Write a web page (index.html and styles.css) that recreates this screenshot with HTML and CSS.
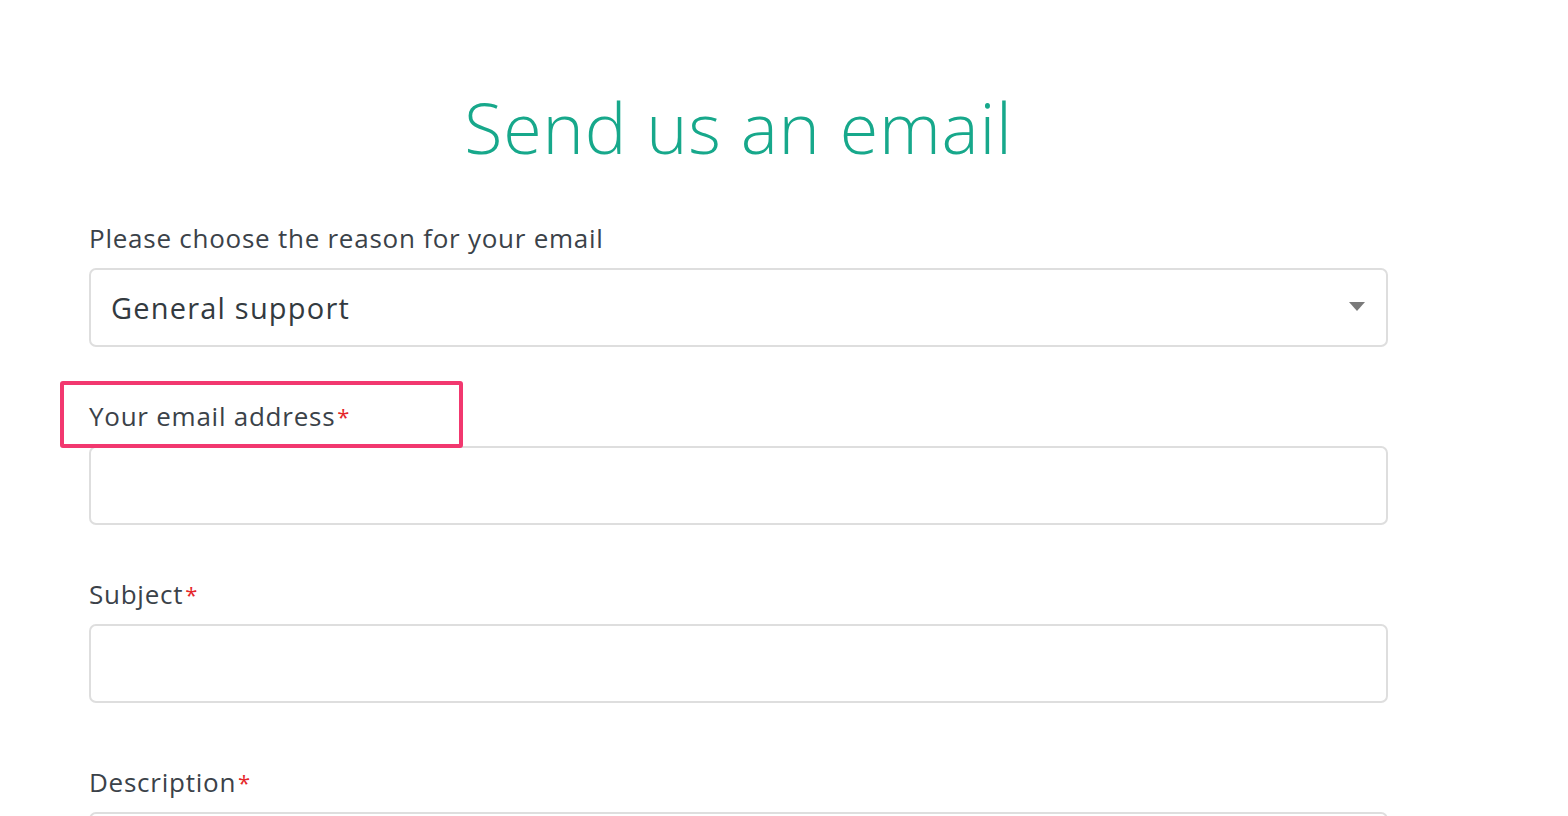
FILE: index.html
```html
<!DOCTYPE html>
<html>
    <head>
        <meta charset="UTF-8">
        <meta name="viewport" content="width=device-width, initial-scale=1">
        <title>Send us an email</title>
        <link rel="stylesheet" href="styles.css">
    </head>
    <body>
        <main class="page">
            <h1 class="page-title">Send us an email</h1>

            <form class="contact-form">
                <div class="field">
                    <label for="reason" class="field-label">Please choose the reason for your email</label>
                    <div class="select-wrap">
                        <select id="reason" class="field-input field-select">
                            <option>General support</option>
                            <option>Billing</option>
                            <option>Technical issue</option>
                        </select>
                        <svg class="select-caret" width="16" height="9" viewBox="0 0 16 9">
                            <path d="M0 0 H16 L8 9 Z" fill="#7a7a7a"/>
                        </svg>
                    </div>
                </div>

                <div class="field">
                    <label for="email" class="field-label">Your email address<span class="required">*</span></label>
                    <input type="email" id="email" class="field-input">
                    <!-- annotation box round the label -->
                    <div class="highlight"></div>
                </div>

                <div class="field field-spaced">
                    <label for="subject" class="field-label">Subject<span class="required">*</span></label>
                    <input type="text" id="subject" class="field-input">
                </div>

                <div class="field">
                    <label for="description" class="field-label">Description<span class="required">*</span></label>
                    <textarea id="description" class="field-input field-textarea"></textarea>
                </div>
            </form>
        </main>
    </body>
</html>
```
FILE: styles.css
```css
body {
    margin: 0;
    background: #ffffff;
    font-family: "Open Sans", "Noto Sans", sans-serif;
    color: #3b4249;
}
.page {
    width: 1299px;
    margin-left: 89px;
    padding-top: 85px;
}
.page-title {
    margin: 0 0 53px;
    text-align: center;
    font-size: 70px;
    line-height: 84px;
    font-weight: 300;
    letter-spacing: 0.8px;
    color: #17a88b;
}
.contact-form {
    display: flex;
    flex-direction: column;
    gap: 53px;
}
.field {
    position: relative;
    display: flex;
    flex-direction: column;
    gap: 14px;
}
.field-spaced {
    margin-bottom: 10px;
}
.field-label {
    font-size: 26px;
    line-height: 32px;
    letter-spacing: 0.75px;
    color: #3b4249;
}
.required {
    color: #e5262a;
    margin-left: 2px;
    font-size: 22px;
    vertical-align: top;
}
.field-input {
    box-sizing: border-box;
    width: 100%;
    height: 79px;
    margin: 0;
    padding: 0 20px;
    border: 2px solid #dedede;
    border-radius: 7px;
    background: #ffffff;
    font-family: inherit;
    font-size: 29px;
    letter-spacing: 1.2px;
    color: #333a40;
    outline: none;
}
.select-wrap {
    position: relative;
}
.field-select {
    appearance: none;
    -webkit-appearance: none;
}
.select-caret {
    position: absolute;
    right: 23px;
    top: 34px;
    pointer-events: none;
}
.field-textarea {
    height: 200px;
    resize: none;
}
.highlight {
    position: absolute;
    left: -29px;
    top: -19px;
    width: 403px;
    height: 67px;
    box-sizing: border-box;
    border: 4px solid #f2386f;
    border-radius: 3px;
    pointer-events: none;
}
```
